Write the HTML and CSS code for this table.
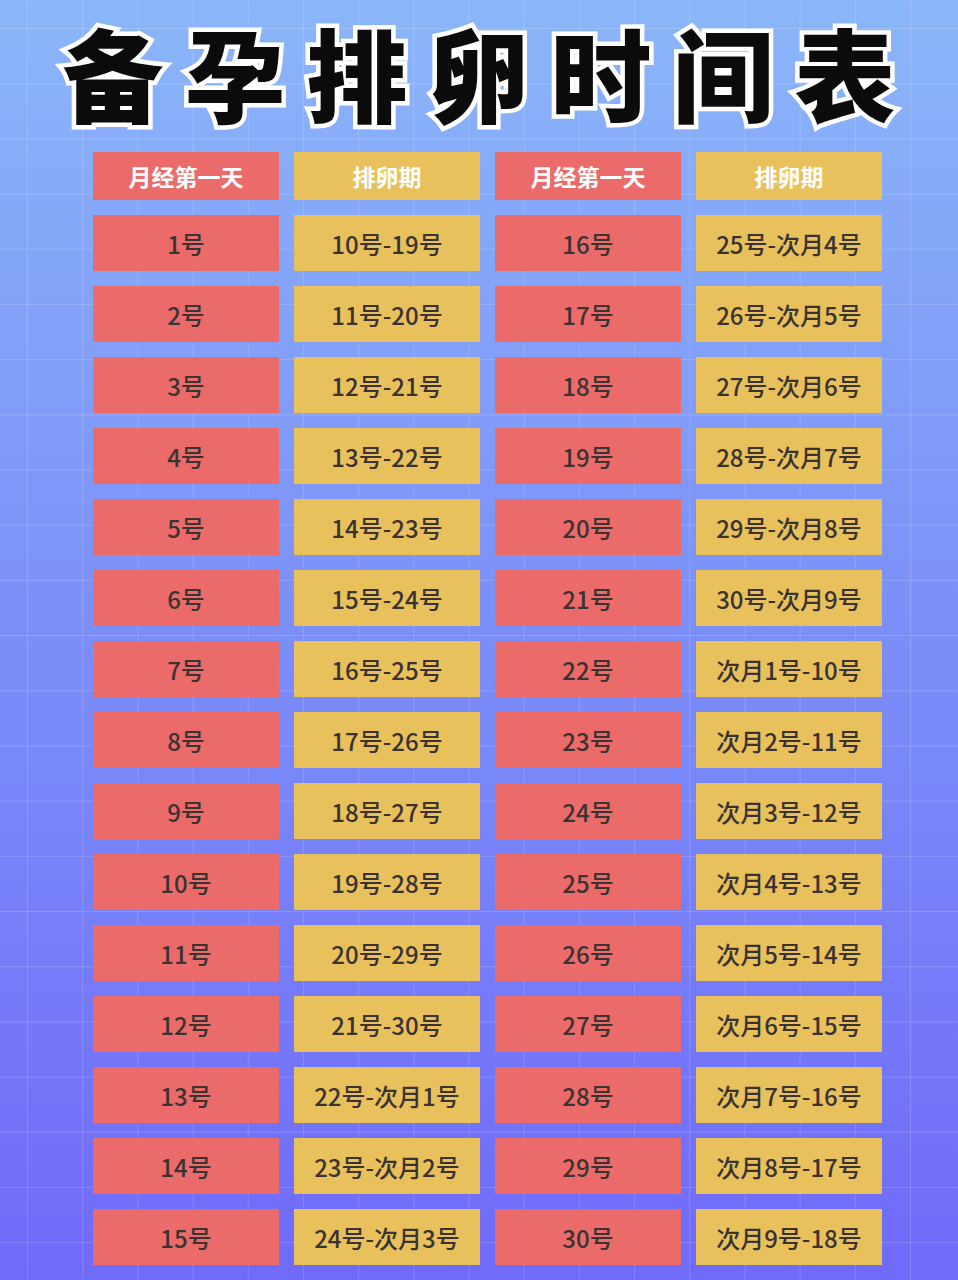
FILE: index.html
```html
<!DOCTYPE html>
<html lang="zh-CN">
<head>
<meta charset="utf-8">
<title>备孕排卵时间表</title>
<link rel="stylesheet" href="styles.css">
</head>
<body>
<div class="page">
  <h1 class="title">备孕排卵时间表</h1>
  <div class="table">
    <div class="cell head red">月经第一天</div>
    <div class="cell head yellow">排卵期</div>
    <div class="cell head red">月经第一天</div>
    <div class="cell head yellow">排卵期</div>

    <div class="cell red">1号</div><div class="cell yellow">10号-19号</div><div class="cell red">16号</div><div class="cell yellow">25号-次月4号</div>
    <div class="cell red">2号</div><div class="cell yellow">11号-20号</div><div class="cell red">17号</div><div class="cell yellow">26号-次月5号</div>
    <div class="cell red">3号</div><div class="cell yellow">12号-21号</div><div class="cell red">18号</div><div class="cell yellow">27号-次月6号</div>
    <div class="cell red">4号</div><div class="cell yellow">13号-22号</div><div class="cell red">19号</div><div class="cell yellow">28号-次月7号</div>
    <div class="cell red">5号</div><div class="cell yellow">14号-23号</div><div class="cell red">20号</div><div class="cell yellow">29号-次月8号</div>
    <div class="cell red">6号</div><div class="cell yellow">15号-24号</div><div class="cell red">21号</div><div class="cell yellow">30号-次月9号</div>
    <div class="cell red">7号</div><div class="cell yellow">16号-25号</div><div class="cell red">22号</div><div class="cell yellow">次月1号-10号</div>
    <div class="cell red">8号</div><div class="cell yellow">17号-26号</div><div class="cell red">23号</div><div class="cell yellow">次月2号-11号</div>
    <div class="cell red">9号</div><div class="cell yellow">18号-27号</div><div class="cell red">24号</div><div class="cell yellow">次月3号-12号</div>
    <div class="cell red">10号</div><div class="cell yellow">19号-28号</div><div class="cell red">25号</div><div class="cell yellow">次月4号-13号</div>
    <div class="cell red">11号</div><div class="cell yellow">20号-29号</div><div class="cell red">26号</div><div class="cell yellow">次月5号-14号</div>
    <div class="cell red">12号</div><div class="cell yellow">21号-30号</div><div class="cell red">27号</div><div class="cell yellow">次月6号-15号</div>
    <div class="cell red">13号</div><div class="cell yellow">22号-次月1号</div><div class="cell red">28号</div><div class="cell yellow">次月7号-16号</div>
    <div class="cell red">14号</div><div class="cell yellow">23号-次月2号</div><div class="cell red">29号</div><div class="cell yellow">次月8号-17号</div>
    <div class="cell red">15号</div><div class="cell yellow">24号-次月3号</div><div class="cell red">30号</div><div class="cell yellow">次月9号-18号</div>
  </div>
</div>
</body>
</html>
```

FILE: styles.css
```css
html, body {
  margin: 0;
  padding: 0;
}

body {
  width: 958px;
  height: 1280px;
  overflow: hidden;
  font-family: "Noto Sans CJK SC", "Noto Sans", sans-serif;
  background-color: #7d8ef8;
  background-image:
    linear-gradient(to right, rgba(255,255,255,0.16) 1px, transparent 1px),
    linear-gradient(to bottom, rgba(255,255,255,0.16) 1px, transparent 1px),
    linear-gradient(to bottom, #8bb6f8 0%, #7c92f8 45%, #706af9 100%);
  background-size: 55.2px 55.2px, 55.2px 55.2px, 100% 100%;
  background-position: 27px 28px, 27px 28px, 0 0;
}

.page {
  display: flex;
  flex-direction: column;
  align-items: stretch;
  padding-top: 14px;
}

.title {
  margin: 0;
  height: 124px;
  text-align: center;
  font-family: "Noto Sans CJK SC", sans-serif;
  font-weight: 900;
  font-size: 101px;
  line-height: 114px;
  letter-spacing: 21px;
  padding-left: 21px;
  color: #0b0b0b;
  -webkit-text-stroke: 9px #ffffff;
  paint-order: stroke fill;
}

.table {
  margin-top: 14px;
  padding-left: 93px;
  display: grid;
  grid-template-columns: repeat(4, 186px);
  grid-template-rows: 48px;
  grid-auto-rows: 56px;
  column-gap: 15px;
  row-gap: 15px;
}

.cell {
  display: flex;
  align-items: center;
  justify-content: center;
  font-size: 24px;
  font-weight: 500;
  color: #3a3332;
  white-space: nowrap;
}

.cell.head {
  color: #ffffff;
  font-size: 23px;
  font-weight: 700;
}

.red {
  background: #eb6b6a;
}

.yellow {
  background: #e9c15c;
}
```
